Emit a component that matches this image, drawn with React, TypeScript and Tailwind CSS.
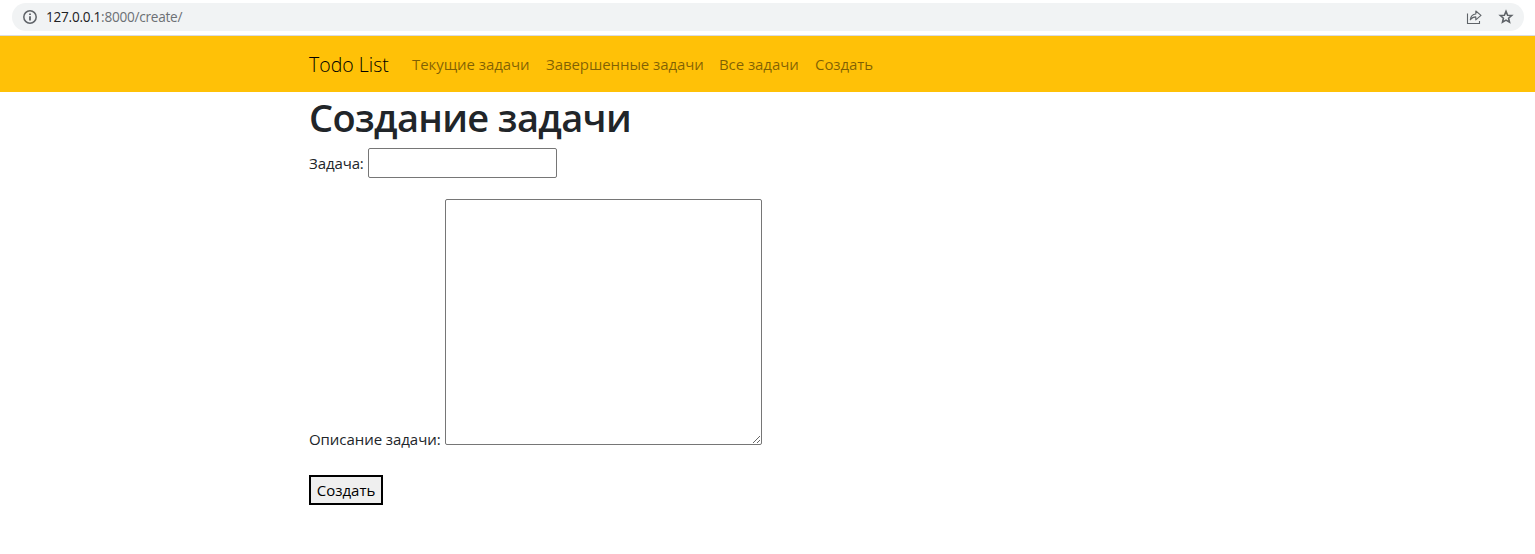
import React from "react";

const links = [
  { label: "Текущие задачи", width: "w-[118px]" },
  { label: "Завершенные задачи", width: "w-[157px]" },
  { label: "Все задачи", width: "w-[80px]" },
  { label: "Создать", width: "w-[59px]" },
];

function AddressBar() {
  return (
    <div className="h-9 border-b border-[#dadce0] bg-white px-[11.5px] pt-[3px]">
      <div className="flex h-7 items-center rounded-full bg-[#f1f3f4] pl-[10.5px] pr-[9.5px]">
        <svg width="16" height="16" viewBox="0 0 16 16" fill="none" className="shrink-0">
          <circle cx="8" cy="8" r="6.2" stroke="#5f6368" strokeWidth="1.5" />
          <path d="M8 7.2V11.5M8 4.5V6" stroke="#5f6368" strokeWidth="1.8" />
        </svg>
        <div className="ml-[8px] whitespace-nowrap text-[13.6px] leading-5 tracking-[-0.25px] text-[#6c7074]">
          <span className="text-[#202124]">127.0.0.1</span>:8000/create/
        </div>
        <div className="ml-auto flex items-center gap-4">
          <svg width="16" height="16" viewBox="0 0 16 16" fill="none" stroke="#5f6368" strokeWidth="1.1">
            <path d="M1.5 4.5V14.5H13.5V12" />
            <path d="M4.3 10.8C4.8 7 6.8 5.1 9.8 5V2L15 6.4L9.8 10.8V7.9C7.3 7.9 5.8 8.7 4.3 10.8Z" strokeLinejoin="round" />
          </svg>
          <svg width="16" height="16" viewBox="0 0 16 16" fill="none" stroke="#5f6368" strokeWidth="1.6">
            <path d="M8 2.4L9.6 6.2L13.7 6.5L10.6 9.2L11.5 13.2L8 11.1L4.5 13.2L5.4 9.2L2.3 6.5L6.4 6.2Z" />
          </svg>
        </div>
      </div>
    </div>
  );
}

function Navbar() {
  return (
    <nav className="flex h-14 items-center bg-[#ffc107] pl-[309px]">
      <a className="w-[79px] whitespace-nowrap pt-px text-[19.5px] font-light leading-[30px] text-black">Todo List</a>
      <div className="ml-6 flex gap-4">
        {links.map((link) => (
          <a key={link.label} className={`${link.width} whitespace-nowrap text-[15px] leading-6 tracking-[-0.07px] text-black/50`}>
            {link.label}
          </a>
        ))}
      </div>
    </nav>
  );
}

export default function App() {
  return (
    <div className="h-[554px] overflow-hidden bg-white font-['Open_Sans','Noto_Sans',sans-serif] text-[15px] text-[#212529]">
      <AddressBar />
      <Navbar />
      <main className="pl-[309px]">
        <h1 className="h-14 whitespace-nowrap pt-px text-[38px] font-semibold leading-[48px] tracking-[-0.66px]">Создание задачи</h1>
        <form onSubmit={(e) => e.preventDefault()}>
          <label className="flex h-[30px] items-center">
            <span className="w-[59px] whitespace-nowrap tracking-[-0.1px]">Задача:</span>
            <input className="h-[30px] w-[189px] rounded-[2px] border border-[#767676] bg-white px-1 outline-none" />
          </label>
          <label className="mt-[21px] flex items-end">
            <span className="w-[136px] whitespace-nowrap leading-3 tracking-[-0.06px]">Описание задачи:</span>
            <textarea className="h-[246px] w-[317px] resize rounded-[2px] border border-[#767676] bg-white p-0.5 outline-none" />
          </label>
          <button className="mt-[30px] flex h-[30px] w-[74px] items-center justify-center whitespace-nowrap border-2 border-black bg-[#efefef] text-black">
            Создать
          </button>
        </form>
      </main>
    </div>
  );
}
